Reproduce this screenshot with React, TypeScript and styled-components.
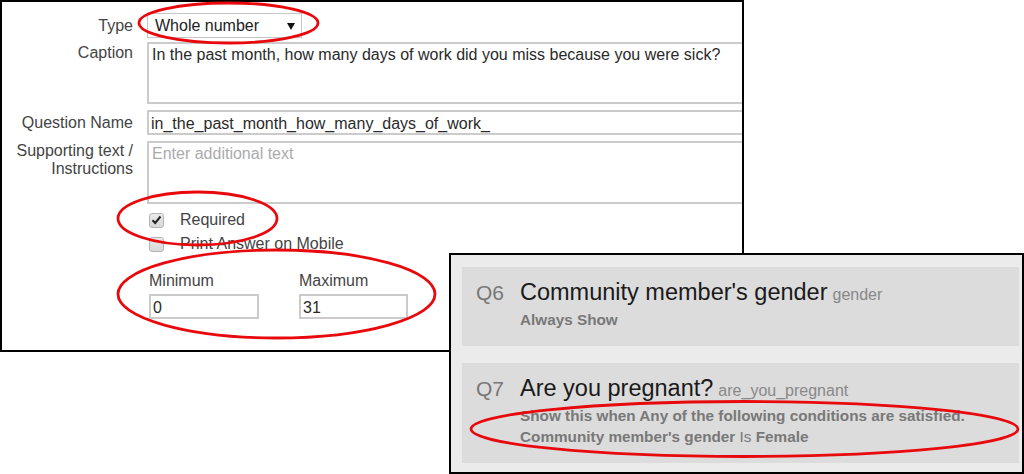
import React from "react";
import styled, { createGlobalStyle } from "styled-components";

const GlobalStyle = createGlobalStyle`
  html, body {
    margin: 0;
    padding: 0;
    background: #ffffff;
  }
  body {
    font-family: "Liberation Sans", Arial, sans-serif;
  }
  * {
    box-sizing: border-box;
  }
`;

const Canvas = styled.div`
  position: relative;
  width: 1024px;
  height: 474px;
  overflow: hidden;
  background: #fff;
`;

// the two screenshots sit on a free canvas, the second one overlapping the first
const FormWindow = styled.div`
  position: absolute;
  left: 0;
  top: 0;
  width: 744px;
  height: 352px;
  border: 2px solid #000;
  background: #fff;
  overflow: hidden;
  padding-top: 11px;
`;

const ListWindow = styled.div`
  position: absolute;
  left: 449px;
  top: 253px;
  width: 575px;
  height: 221px;
  border: 2px solid #000;
  background: #ebebeb;
  overflow: hidden;
  padding: 12px 3px 0 11px;
  display: flex;
  flex-direction: column;
  gap: 17px;
`;

const Row = styled.div<{ $top?: number; $align?: string }>`
  display: flex;
  align-items: ${(p) => p.$align || "center"};
  margin-top: ${(p) => p.$top || 0}px;
`;

const Label = styled.div<{ $offset?: number }>`
  flex: 0 0 131px;
  margin-right: 14px;
  text-align: right;
  font-size: 16px;
  line-height: 18px;
  color: #444;
  align-self: ${(p) => (p.$offset !== undefined ? "flex-start" : "auto")};
  margin-top: ${(p) => p.$offset || 0}px;
`;

const TwoLineLabel = styled(Label)`
  line-height: 17.5px;
`;

const Field = styled.div`
  flex: 1;
  margin-right: -12px;
`;

const Select = styled.div`
  width: 155px;
  height: 25px;
  border: 1.5px solid #c6c6c6;
  background: #fff;
  display: flex;
  align-items: center;
  justify-content: space-between;
  padding: 0 6px 0 7px;
  font-size: 16px;
  color: #222;
`;

const Caret = styled.span`
  width: 0;
  height: 0;
  border-left: 4.5px solid transparent;
  border-right: 4.5px solid transparent;
  border-top: 7px solid #111;
  margin-top: 1px;
`;

const TextBox = styled.div<{ $h: number; $muted?: boolean }>`
  height: ${(p) => p.$h}px;
  border: 2px solid #cbcbcb;
  background: #fff;
  padding: 2px 3px;
  font-size: 16px;
  line-height: 18px;
  color: ${(p) => (p.$muted ? "#ababab" : "#2a2a2a")};
  white-space: nowrap;
`;

const LineInput = styled.div<{ $w?: number }>`
  height: 25px;
  width: ${(p) => (p.$w ? `${p.$w}px` : "auto")};
  border: 2px solid #cbcbcb;
  background: #fff;
  padding: 3px 2px 0;
  font-size: 16px;
  line-height: 18px;
  color: #2a2a2a;
  white-space: nowrap;
`;

const CheckRow = styled.div<{ $top: number }>`
  display: flex;
  align-items: center;
  margin: ${(p) => p.$top}px 0 0 147px;
  font-size: 16px;
  line-height: 18px;
  color: #444;
  gap: 16px;
`;

const Box = styled.span`
  width: 15px;
  height: 15px;
  border: 1px solid #b5b5b5;
  border-radius: 3px;
  background: linear-gradient(#e9e9e9, #d8d8d8);
  display: flex;
  align-items: center;
  justify-content: center;
`;

const RangeRow = styled.div`
  display: flex;
  gap: 40px;
  margin: 19px 0 0 147px;
`;

const RangeField = styled.div`
  display: flex;
  flex-direction: column;
  gap: 4px;
  font-size: 16px;
  line-height: 18px;
  color: #444;
`;

const Card = styled.div`
  background: #dcdcdc;
  padding: 11px 14px 15px;
  display: grid;
  grid-template-columns: 44px 1fr;
  align-items: baseline;
`;

const QNum = styled.span`
  font-size: 21px;
  color: #777;
  line-height: 28px;
`;

const Title = styled.span`
  font-size: 23.5px;
  line-height: 28px;
  color: #1a1a1a;
  white-space: nowrap;
`;

const VarName = styled.span`
  font-size: 16px;
  color: #888;
  margin-left: 5px;
`;

const Rule = styled.div`
  grid-column: 2;
  font-size: 15.3px;
  line-height: 21.5px;
  font-weight: bold;
  color: #787878;
  white-space: nowrap;
`;

const Plain = styled.span`
  font-weight: normal;
`;

const Marks = styled.svg`
  position: absolute;
  left: 0;
  top: 0;
  pointer-events: none;
`;

const ellipses = [
  { cx: 228.5, cy: 23, rx: 89.5, ry: 20 },
  { cx: 197.5, cy: 218.5, rx: 79.5, ry: 26.5 },
  { cx: 276.5, cy: 294, rx: 158.5, ry: 44 },
  { cx: 744.5, cy: 429, rx: 273.5, ry: 27.5 },
];

function Check() {
  return (
    <svg width="11" height="10" viewBox="0 0 11 10">
      <path d="M1.5 5.2 L4.2 8 L9.5 1.5" fill="none" stroke="#222" strokeWidth="2" />
    </svg>
  );
}

export default function App(): JSX.Element {
  return (
    <Canvas>
      <GlobalStyle />
      <FormWindow>
        <Row>
          <Label>Type</Label>
          <Field>
            <Select>
              Whole number
              <Caret />
            </Select>
          </Field>
        </Row>
        <Row $top={4}>
          <Label $offset={2}>Caption</Label>
          <Field>
            <TextBox $h={62}>
              In the past month, how many days of work did you miss because you were sick?
            </TextBox>
          </Field>
        </Row>
        <Row $top={6}>
          <Label>Question Name</Label>
          <Field>
            <LineInput>in_the_past_month_how_many_days_of_work_</LineInput>
          </Field>
        </Row>
        <Row $top={6}>
          <TwoLineLabel $offset={1}>
            Supporting text /
            <br />
            Instructions
          </TwoLineLabel>
          <Field>
            <TextBox $h={63} $muted>
              Enter additional text
            </TextBox>
          </Field>
        </Row>
        <CheckRow $top={7}>
          <Box>
            <Check />
          </Box>
          Required
        </CheckRow>
        <CheckRow $top={6}>
          <Box />
          Print Answer on Mobile
        </CheckRow>
        <RangeRow>
          <RangeField>
            Minimum
            <LineInput $w={110}>0</LineInput>
          </RangeField>
          <RangeField>
            Maximum
            <LineInput $w={109}>31</LineInput>
          </RangeField>
        </RangeRow>
      </FormWindow>

      <ListWindow>
        <Card>
          <QNum>Q6</QNum>
          <Title>
            Community member's gender<VarName>gender</VarName>
          </Title>
          <Rule>Always Show</Rule>
        </Card>
        <Card>
          <QNum>Q7</QNum>
          <Title>
            Are you pregnant?<VarName>are_you_pregnant</VarName>
          </Title>
          <Rule>
            Show this when Any of the following conditions are satisfied.
            <br />
            Community member's gender <Plain>Is</Plain> Female
          </Rule>
        </Card>
      </ListWindow>

      <Marks width="1024" height="474" viewBox="0 0 1024 474">
        {ellipses.map((e, i) => (
          <ellipse key={i} cx={e.cx} cy={e.cy} rx={e.rx} ry={e.ry} fill="none" stroke="#e8090c" strokeWidth="2.8" />
        ))}
      </Marks>
    </Canvas>
  );
}
